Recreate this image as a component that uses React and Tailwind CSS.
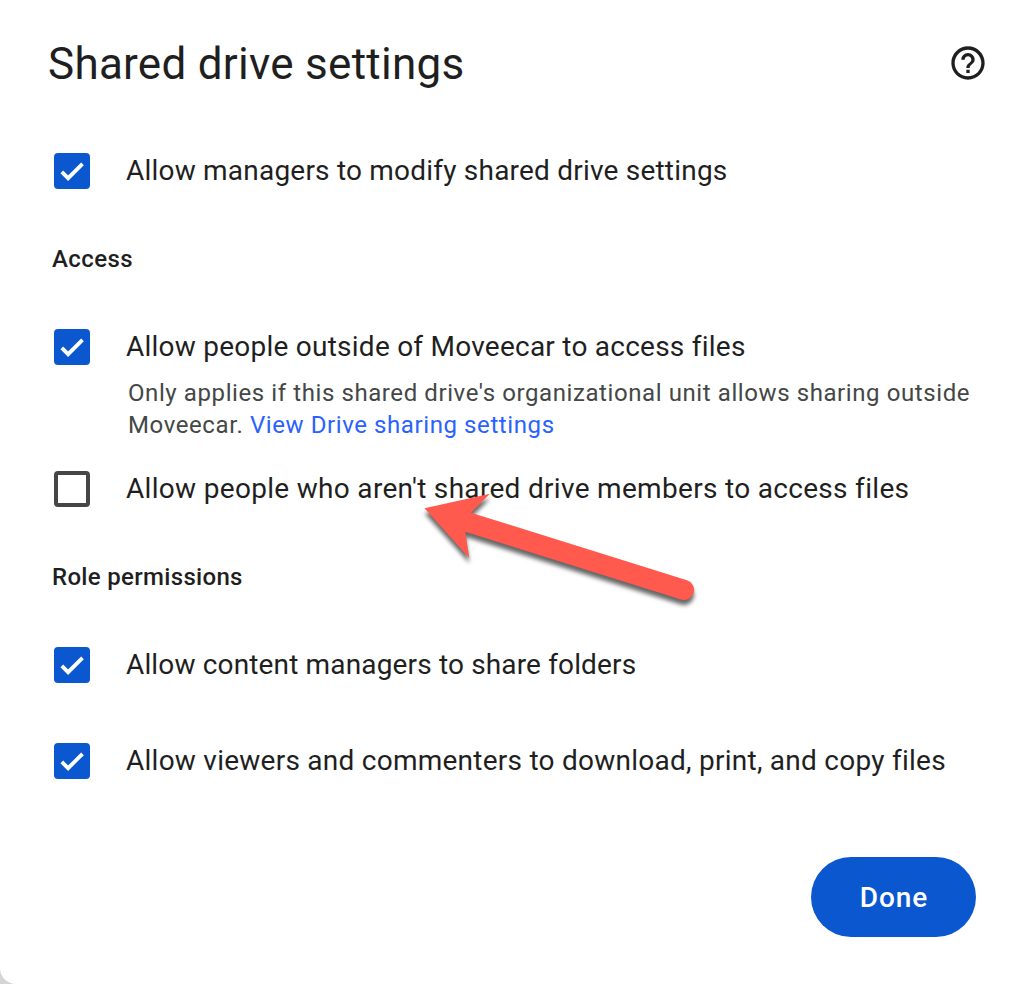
import React from 'react';

function Checkbox({ checked }) {
  if (!checked) {
    return <span className="block size-9 shrink-0 rounded-[4px] border-4 border-[#444746] bg-white" />;
  }
  return (
    <span className="block size-9 shrink-0 rounded-[4px] bg-[#0b57d0]">
      <svg viewBox="0 0 36 36" className="size-9" fill="none">
        <path d="M7.8 18.9 14.1 25.2 28.5 10.8" stroke="#fff" strokeWidth="3.8" />
      </svg>
    </span>
  );
}

function Option({ checked, className, children }) {
  return (
    <label className="flex h-9 items-center gap-[36px] pl-[54px]">
      <Checkbox checked={checked} />
      <span className={`-mt-px whitespace-nowrap text-[28px] leading-9 text-[#1f1f1f] ${className}`}>{children}</span>
    </label>
  );
}

function Heading({ className, children }) {
  return <h2 className={`pl-[52px] text-[24px] leading-8 font-medium text-[#1f1f1f] ${className}`}>{children}</h2>;
}

export default function App() {
  return (
    <div className="h-[984px] w-[1012px] overflow-hidden bg-[#d4d4d4] font-['Roboto',sans-serif]">
      <main className="relative flex h-full flex-col rounded-bl-[16px] bg-white">
        <header className="flex h-[126px] items-start justify-between pt-[36px] pr-[24px] pl-[48px]">
          <h1 className="text-[44px] leading-[56px] whitespace-nowrap text-[#1f1f1f] tracking-[0.27px]">
            Shared drive settings
          </h1>
          <svg viewBox="0 0 24 24" className="mt-[7px] size-10" fill="#1f1f1f">
            <path d="M11 18h2v-2h-2v2zm1-16C6.480 2 2 6.480 2 12s4.480 10 10 10 10-4.480 10-10S17.520 2 12 2zm0 18c-4.410 0-8-3.590-8-8s3.590-8 8-8 8 3.590 8 8-3.590 8-8 8zm0-14c-2.210 0-4 1.790-4 4h2c0-1.100.9-2 2-2s2 .9 2 2c0 2-3 1.750-3 5h2c0-2.250 3-2.500 3-5 0-2.210-1.790-4-4-4z" />
          </svg>
        </header>

        <div className="pt-[27px]">
          <Option checked className="tracking-[0.21px]">Allow managers to modify shared drive settings</Option>
        </div>

        <section className="pt-[54px]">
          <Heading className="tracking-[0.4px]">Access</Heading>
          <div className="pt-[54px]">
            <Option checked className="tracking-[0.24px]">Allow people outside of Moveecar to access files</Option>
            <p className="pt-[12px] pl-[128px] text-[24px] leading-8 whitespace-nowrap text-[#444746] tracking-[0.59px]">
              Only applies if this shared drive's organizational unit allows sharing outside
              <br />
              Moveecar. <a className="text-[#2962ff]">View Drive sharing settings</a>
            </p>
          </div>
          <div className="pt-[30px]">
            <Option className="tracking-[0.31px]">Allow people who aren't shared drive members to access files</Option>
          </div>
        </section>

        <section className="pt-[54px]">
          <Heading className="tracking-[0.32px]">Role permissions</Heading>
          <div className="flex flex-col gap-[60px] pt-[54px]">
            <Option checked className="tracking-[0.15px]">Allow content managers to share folders</Option>
            <Option checked className="tracking-[0.25px]">Allow viewers and commenters to download, print, and copy files</Option>
          </div>
        </section>

        <footer className="flex justify-end pt-[78px] pr-[36px]">
          <button className="h-20 w-[165px] rounded-full bg-[#0b57d0] pt-px pl-px text-[28px] font-medium text-white tracking-[0.9px]">
            Done
          </button>
        </footer>

        <svg
          viewBox="410 470 300 150"
          className="pointer-events-none absolute top-[470px] left-[410px] h-[150px] w-[300px] overflow-visible drop-shadow-[0px_5px_2px_rgba(0,0,0,0.6)]"
        >
          <path d="M424.500 508.300 490 493.700 471 512.700 687 580.300A10 10 0 0 1 681 599.500L465.300 531.700 469.300 558Z" fill="#ff5a4d" />
        </svg>
      </main>
    </div>
  );
}
